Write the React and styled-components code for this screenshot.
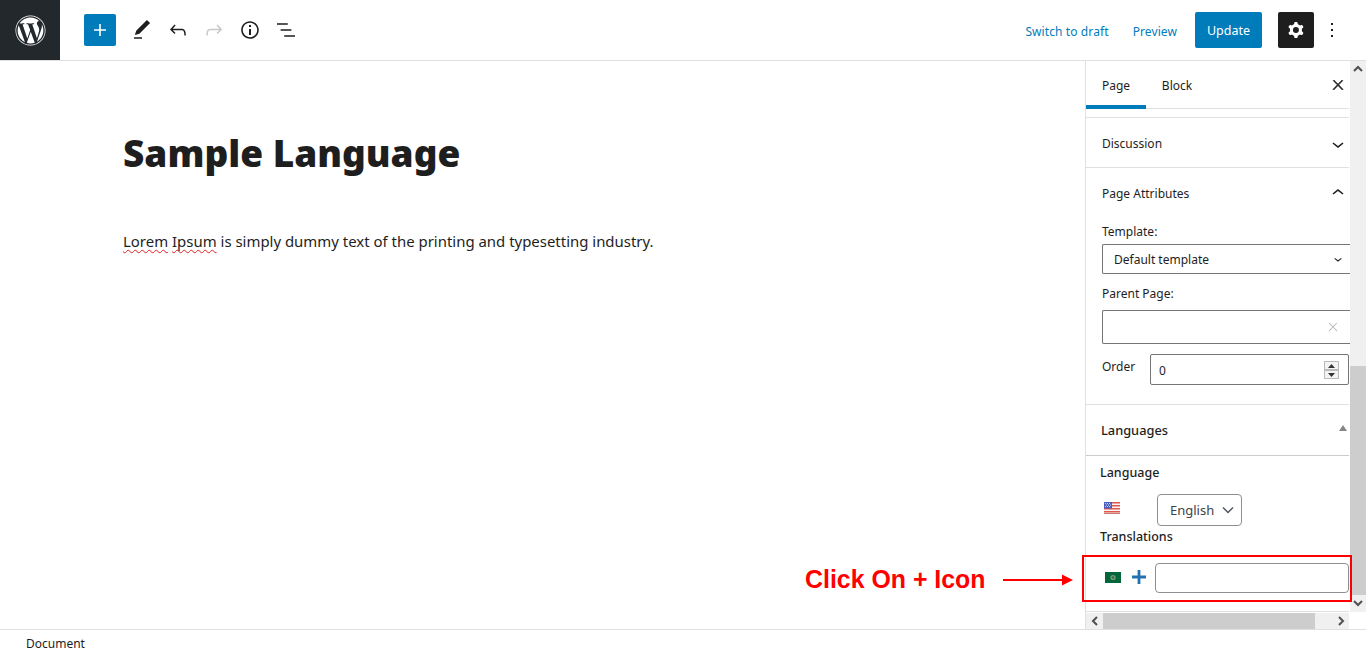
import React from "react";
import styled, { createGlobalStyle } from "styled-components";
import { FaWordpress } from "react-icons/fa";

const GlobalStyle = createGlobalStyle`
  html, body {
    margin: 0;
    padding: 0;
    background: #fff;
    overflow: hidden;
  }
  * {
    box-sizing: border-box;
  }
`;

const Page = styled.div`
  position: relative;
  display: flex;
  flex-direction: column;
  width: 1366px;
  height: 654px;
  overflow: hidden;
  font-family: "Noto Sans", "Open Sans", sans-serif;
  font-size: 12px;
  color: #1e1e1e;
`;

const Header = styled.header`
  display: flex;
  align-items: center;
  flex: 0 0 61px;
  border-bottom: 1px solid #e0e0e0;
`;

const Logo = styled.div`
  display: flex;
  align-items: center;
  justify-content: center;
  width: 60px;
  height: 60px;
  background: #23282d;
  color: #fff;
`;

const Tools = styled.div`
  display: flex;
  align-items: center;
  margin-left: 24px;
  flex: 1;
`;

const AddButton = styled.div`
  display: flex;
  align-items: center;
  justify-content: center;
  width: 32px;
  height: 32px;
  margin-right: 8px;
  border-radius: 2px;
  background: #007cba;
  color: #fff;
`;

const ToolIcon = styled.div`
  display: flex;
  align-items: center;
  justify-content: center;
  width: 36px;
  height: 36px;
  color: ${(p) => (p.$muted ? "#c8c8c8" : "#1e1e1e")};
`;

const Actions = styled.div`
  display: flex;
  align-items: center;
  padding-right: 22px;
`;

const LinkText = styled.span`
  color: #007cba;
  font-size: 12px;
  margin-top: 2px;
  margin-right: ${(p) => p.$gap}px;
  letter-spacing: 0.1px;
`;

const UpdateButton = styled.div`
  display: flex;
  align-items: center;
  justify-content: center;
  width: 67px;
  height: 36px;
  margin-right: 16px;
  padding-top: 1px;
  border-radius: 2px;
  background: #007cba;
  color: #fff;
  font-size: 12.5px;
`;

const GearButton = styled.div`
  display: flex;
  align-items: center;
  justify-content: center;
  width: 36px;
  height: 36px;
  margin-right: 6px;
  border-radius: 2px;
  background: #1e1e1e;
  color: #fff;
`;

const Body = styled.div`
  display: flex;
  flex: 1;
  min-height: 0;
`;

const Editor = styled.main`
  flex: 1;
  padding: 66px 0 0 123px;
`;

const Title = styled.h1`
  margin: 0;
  font-size: 37px;
  line-height: 52px;
  font-weight: 900;
  color: #1e1e1e;
`;

const Paragraph = styled.p`
  margin: 49px 0 0;
  font-size: 14.95px;
  line-height: 26px;
  color: #1e1e1e;
`;

const Misspelled = styled.span`
  text-decoration: underline wavy #e02020 1px;
  text-decoration-skip-ink: none;
  text-underline-offset: 2px;
`;

const Sidebar = styled.aside`
  display: flex;
  flex-direction: column;
  width: 281px;
  border-left: 1px solid #e0e0e0;
`;

const SidebarTop = styled.div`
  display: flex;
  flex: 1;
  min-height: 0;
`;

const Panel = styled.div`
  flex: 1;
  min-width: 0;
  overflow: hidden;
`;

const Tabs = styled.div`
  display: flex;
  align-items: center;
  height: 48px;
  border-bottom: 1px solid #e0e0e0;
  margin-right: 1px;
`;

const Tab = styled.div`
  display: flex;
  align-items: center;
  justify-content: center;
  width: ${(p) => p.$width}px;
  height: 47px;
  padding-top: 1px;
  font-size: 12px;
  box-shadow: ${(p) => (p.$active ? "inset 0 -3px 0 #007cba, 0 1px 0 #007cba" : "none")};
`;

const TabClose = styled.div`
  display: flex;
  margin-left: auto;
  margin-right: 3px;
`;

const Section = styled.section`
  border-top: 1px solid #e0e0e0;
  margin-right: 1px;
  margin-top: ${(p) => p.$top || 0}px;
`;

const SectionHead = styled.div`
  display: flex;
  align-items: center;
  justify-content: space-between;
  height: ${(p) => p.$height}px;
  padding: ${(p) => p.$nudge || 0}px 0 0 16px;
  font-size: 12px;
`;

const ChevronBox = styled.div`
  display: flex;
  width: 24px;
  margin-right: -1px;
`;

const SectionBody = styled.div`
  padding: 0 0 0 16px;
  height: 181px;
`;

const FieldLabel = styled.div`
  font-size: 12px;
  line-height: 16px;
  padding-top: 1px;
  margin-top: ${(p) => p.$top || 0}px;
`;

const SelectBox = styled.div`
  display: flex;
  align-items: center;
  justify-content: space-between;
  width: 248px;
  height: 30px;
  margin-top: 4px;
  padding-left: 11px;
  padding-right: 0;
  border: 1px solid #757575;
  border-right: 0;
  border-radius: 2px 0 0 2px;
  font-size: 12px;
`;

const SelectArrow = styled.div`
  display: flex;
  justify-content: center;
  width: 24px;
`;

const ComboBox = styled(SelectBox)`
  height: 34px;
  margin-top: 8px;
  padding-right: 5px;
  color: #b5b5b5;
`;

const OrderRow = styled.div`
  display: flex;
  align-items: flex-start;
  margin-top: 10px;
`;

const OrderLabel = styled.div`
  width: 48px;
  padding-top: 5px;
  font-size: 12px;
  line-height: 16px;
`;

const NumberInput = styled.div`
  display: flex;
  align-items: center;
  justify-content: space-between;
  width: 199px;
  height: 31px;
  padding: 2px 9px 0 8px;
  border: 1px solid #757575;
  border-radius: 2px;
  font-size: 12px;
`;

const Spinner = styled.div`
  display: flex;
  flex-direction: column;
  width: 15px;
  height: 18px;
  background: #e8e8e8;
  margin-top: -1px;
`;

const SpinCell = styled.div`
  display: flex;
  align-items: center;
  justify-content: center;
  flex: 1;
  border: 1px solid #bbb;
  background: #f3f3f3;
`;

const LangHead = styled.div`
  display: flex;
  align-items: center;
  justify-content: space-between;
  height: 51px;
  padding: 0 2px 1px 15px;
  border-bottom: 1px solid #ccc;
  font-size: 12.8px;
  font-weight: 500;
`;

const Triangle = styled.span`
  width: 0;
  height: 0;
  margin-bottom: 3px;
  border-left: 4px solid transparent;
  border-right: 4px solid transparent;
  border-bottom: 6px solid #82878c;
`;

const LangBody = styled.div`
  padding: 8px 0 0 14px;
  font-size: 13px;
`;

const LangTitle = styled.div`
  font-size: 12.5px;
  font-weight: 500;
  line-height: 18px;
`;

const LangRow = styled.div`
  display: flex;
  align-items: flex-start;
  height: 34px;
  margin-top: 12px;
`;

const FlagSlot = styled.div`
  width: 57px;
  padding: 8px 0 0 4px;
  display: flex;
`;

const LangSelect = styled.div`
  display: flex;
  align-items: center;
  justify-content: space-between;
  width: 85px;
  height: 32px;
  padding: 0 7px 0 12px;
  border: 1px solid #8c8f94;
  border-radius: 4px;
  font-size: 13px;
  color: #3c434a;
`;

const TranslationRow = styled.div`
  display: flex;
  align-items: center;
  height: 30px;
  margin-top: 17px;
  padding-left: 5px;
`;

const FlagNudge = styled.div`
  display: flex;
  margin-bottom: 2px;
`;

const PlusIcon = styled.div`
  display: flex;
  margin: 0 9px 2px 11px;
`;

const TextField = styled.input`
  width: 194px;
  height: 30px;
  padding: 0 8px;
  border: 1px solid #8c8f94;
  border-radius: 4px;
  background: #fff;
  outline: none;
`;

const PanelEnd = styled.div`
  height: 1px;
  margin-top: 18px;
  background: #e0e0e0;
`;

const VScroll = styled.div`
  display: flex;
  flex-direction: column;
  flex: 0 0 16px;
  background: #f0f0f0;
`;

const ScrollArrow = styled.div`
  display: flex;
  align-items: center;
  justify-content: center;
  flex: 0 0 ${(p) => p.$size || 16}px;
  color: #505050;
`;

const VThumb = styled.div`
  width: 16px;
  height: 229px;
  margin-top: 289px;
  background: #cdcdcd;
`;

const HScroll = styled.div`
  display: flex;
  align-items: stretch;
  flex: 0 0 16px;
  width: 263px;
  background: #f0f0f0;
  margin-top: 1px;
`;

const HThumb = styled.div`
  width: 212px;
  background: #cdcdcd;
`;

const HSpacer = styled.div`
  flex: 1;
`;

const Footer = styled.footer`
  display: flex;
  align-items: center;
  flex: 0 0 25px;
  padding: 2px 0 0 26px;
  border-top: 1px solid #e0e0e0;
  font-size: 12px;
`;

/* annotation drawn on top of the screenshot */
const Callout = styled.div`
  position: absolute;
  left: 1082px;
  top: 555px;
  width: 270px;
  height: 47px;
  border: 2px solid #f00;
`;

const CalloutText = styled.div`
  position: absolute;
  left: 805px;
  top: 564px;
  font-family: "Liberation Sans", Arial, sans-serif;
  font-size: 24.9px;
  line-height: 30px;
  font-weight: 700;
  color: #f00;
`;

const CalloutArrow = styled.svg`
  position: absolute;
  left: 1003px;
  top: 574px;
`;

const Icon = ({ d, size = 24, box = 24, rule, bold }) => (
  <svg width={size} height={size} viewBox={`0 0 ${box} ${box}`} fill="currentColor">
    <path d={d} fillRule={rule} stroke={bold ? "currentColor" : "none"} strokeWidth={bold ? 1 : 0} />
  </svg>
);

const paths = {
  plus: "M18 11.2h-5.2V6h-1.6v5.2H6v1.6h5.2V18h1.6v-5.2H18z",
  pencil: "M20.1 5.1L16.9 2 6.2 12.7l-1.3 4.4 4.5-1.3L20.1 5.1zM4 20.8h8v-1.5H4v1.5z",
  undo: "M18.3 11.7c-.6-.6-1.4-.9-2.3-.9H6.7l2.9-3.3-1.1-1-4.5 5L8.5 16l1-1-2.7-2.7H16c.5 0 .9.2 1.3.5 1 1 1 3.4 1 4.5v.3h1.5v-.2c0-1.5 0-4.3-1.5-5.7z",
  redo: "M15.6 6.5l-1.1 1 2.9 3.3H8c-.9 0-1.7.3-2.3.9-1.4 1.5-1.4 4.2-1.4 5.6v.2h1.5v-.3c0-1.1 0-3.5 1-4.5.3-.3.7-.5 1.3-.5h9.2L14.5 15l1.1 1.1 4.6-4.6-4.6-5z",
  info: "M12 3.2c-4.8 0-8.8 3.9-8.8 8.8 0 4.8 3.9 8.8 8.8 8.8 4.8 0 8.8-3.9 8.8-8.8 0-4.8-4-8.8-8.8-8.8zm0 16c-4 0-7.2-3.3-7.2-7.2C4.8 8 8 4.8 12 4.8s7.2 3.3 7.2 7.2c0 4-3.2 7.2-7.2 7.2zM11 17h2v-6h-2v6zm0-8h2V7h-2v2z",
  list: "M13.8 5.2H3v1.5h10.8V5.2zm-3.6 12v1.5H21v-1.5H10.2zm7.2-6H6.6v1.5h10.8v-1.5z",
  cog: "M10.289 4.836A1 1 0 0111.275 4h1.306a1 1 0 01.987.836l.244 1.466c.787.26 1.503.679 2.108 1.218l1.393-.522a1 1 0 011.216.437l.653 1.13a1 1 0 01-.23 1.273l-1.148.944a6.025 6.025 0 010 2.435l1.149.946a1 1 0 01.23 1.272l-.653 1.13a1 1 0 01-1.216.437l-1.394-.522c-.605.54-1.32.958-2.108 1.218l-.244 1.466a1 1 0 01-.987.836h-1.306a1 1 0 01-.986-.836l-.244-1.466a5.995 5.995 0 01-2.108-1.218l-1.394.522a1 1 0 01-1.217-.436l-.653-1.131a1 1 0 01.23-1.272l1.149-.946a6.026 6.026 0 010-2.435l-1.148-.944a1 1 0 01-.23-1.272l.653-1.131a1 1 0 011.217-.437l1.393.522a5.994 5.994 0 012.108-1.218l.244-1.466zM14.929 12a3 3 0 11-6 0 3 3 0 016 0z",
  dots: "M13 19h-2v-2h2v2zm0-6h-2v-2h2v2zm0-6h-2V5h2v2z",
  close: "M13 11.8l6.1-6.3-1-1-6.1 6.2-6.1-6.2-1 1 6.1 6.3-6.5 6.7 1 1 6.5-6.6 6.5 6.6 1-1z",
  down: "M17.5 11.6L12 16l-5.5-4.4.9-1.2L12 14l4.5-3.6 1 1.2z",
  up: "M6.5 12.4L12 8l5.5 4.4-.9 1.2L12 10l-4.5 3.6-1-1.2z",
};

const TinyChevron = ({ dir }) => {
  const points = {
    up: "1,7 5,3 9,7",
    down: "1,3 5,7 9,3",
    left: "7,1 3,5 7,9",
    right: "3,1 7,5 3,9",
  };
  return (
    <svg width="10" height="10" viewBox="0 0 10 10" fill="none" stroke="currentColor" strokeWidth="2">
      <polyline points={points[dir]} />
    </svg>
  );
};

const UsFlag = () => (
  <svg width="16" height="12" viewBox="0 0 16 12">
    <rect width="16" height="12" fill="#f4f4f4" />
    <rect y="0" width="16" height="1.5" fill="#e2574c" />
    <rect y="3" width="16" height="1.5" fill="#e2574c" />
    <rect y="6" width="16" height="1.5" fill="#e2574c" />
    <rect y="9" width="16" height="1.5" fill="#e2574c" />
    <rect y="11" width="16" height="1" fill="#c9776f" />
    <rect width="8" height="6.5" fill="#4a5fc0" />
    <path d="M1 1.5h1M3 1.5h1M5 1.5h1M2 3h1M4 3h1M6 3h1M1 4.5h1M3 4.5h1M5 4.5h1" stroke="#e8ecff" strokeWidth="0.8" />
  </svg>
);

const ArabicFlag = () => (
  <svg width="16" height="11" viewBox="0 0 16 11">
    <rect width="16" height="11" fill="#04663a" />
    <circle cx="8" cy="5.5" r="2.6" fill="#7c9a74" />
    <circle cx="8" cy="5.5" r="1.2" fill="#2f6a47" />
  </svg>
);

const BluePlus = () => (
  <svg width="14" height="14" viewBox="0 0 14 14">
    <path d="M5.6 0h2.8v5.6H14v2.8H8.4V14H5.6V8.4H0V5.6h5.6z" fill="#2271b1" />
  </svg>
);

const App = () => (
  <Page>
    <GlobalStyle />
    <Header>
      <Logo>
        <FaWordpress size={31} />
      </Logo>
      <Tools>
        <AddButton>
          <Icon d={paths.plus} />
        </AddButton>
        <ToolIcon>
          <Icon d={paths.pencil} />
        </ToolIcon>
        <ToolIcon>
          <Icon d={paths.undo} />
        </ToolIcon>
        <ToolIcon $muted>
          <Icon d={paths.redo} />
        </ToolIcon>
        <ToolIcon>
          <Icon d={paths.info} />
        </ToolIcon>
        <ToolIcon>
          <Icon d={paths.list} />
        </ToolIcon>
      </Tools>
      <Actions>
        <LinkText $gap={24}>Switch to draft</LinkText>
        <LinkText $gap={18}>Preview</LinkText>
        <UpdateButton>Update</UpdateButton>
        <GearButton>
          <Icon d={paths.cog} rule="evenodd" />
        </GearButton>
        <Icon d={paths.dots} />
      </Actions>
    </Header>

    <Body>
      <Editor>
        <Title>Sample Language</Title>
        <Paragraph>
          <Misspelled>Lorem</Misspelled> <Misspelled>Ipsum</Misspelled> is simply dummy text of the
          printing and typesetting industry.
        </Paragraph>
      </Editor>

      <Sidebar>
        <SidebarTop>
          <Panel>
            <Tabs>
              <Tab $active $width={60}>Page</Tab>
              <Tab $width={62}>Block</Tab>
              <TabClose>
                <Icon d={paths.close} size={16} bold />
              </TabClose>
            </Tabs>
            <Section $top={8}>
              <SectionHead $height={49} $nudge={2}>
                Discussion
                <ChevronBox>
                  <Icon d={paths.down} />
                </ChevronBox>
              </SectionHead>
            </Section>
            <Section>
              <SectionHead $height={50}>
                Page Attributes
                <ChevronBox>
                  <Icon d={paths.up} />
                </ChevronBox>
              </SectionHead>
              <SectionBody>
                <FieldLabel $top={5}>Template:</FieldLabel>
                <SelectBox>
                  Default template
                  <SelectArrow>
                    <Icon d={paths.down} size={16} />
                  </SelectArrow>
                </SelectBox>
                <FieldLabel $top={11}>Parent Page:</FieldLabel>
                <ComboBox>
                  <span />
                  <SelectArrow>
                    <Icon d={paths.close} size={14} />
                  </SelectArrow>
                </ComboBox>
                <OrderRow>
                  <OrderLabel>Order</OrderLabel>
                  <NumberInput>
                    0
                    <Spinner>
                      <SpinCell>
                        <svg width="7" height="4" viewBox="0 0 7 4">
                          <path d="M3.5 0L7 4H0z" fill="#333" />
                        </svg>
                      </SpinCell>
                      <SpinCell>
                        <svg width="7" height="4" viewBox="0 0 7 4">
                          <path d="M0 0h7L3.5 4z" fill="#333" />
                        </svg>
                      </SpinCell>
                    </Spinner>
                  </NumberInput>
                </OrderRow>
              </SectionBody>
            </Section>
            <Section>
              <LangHead>
                Languages
                <Triangle />
              </LangHead>
              <LangBody>
                <LangTitle>Language</LangTitle>
                <LangRow>
                  <FlagSlot>
                    <UsFlag />
                  </FlagSlot>
                  <LangSelect>
                    English
                    <svg width="12" height="8" viewBox="0 0 12 8" fill="none" stroke="#50575e" strokeWidth="1.5">
                      <polyline points="1,1.5 6,6.5 11,1.5" />
                    </svg>
                  </LangSelect>
                </LangRow>
                <LangTitle>Translations</LangTitle>
                <TranslationRow>
                  <FlagNudge>
                    <ArabicFlag />
                  </FlagNudge>
                  <PlusIcon>
                    <BluePlus />
                  </PlusIcon>
                  <TextField aria-label="Translation" />
                </TranslationRow>
              </LangBody>
              <PanelEnd />
            </Section>
          </Panel>
          <VScroll>
            <ScrollArrow>
              <TinyChevron dir="up" />
            </ScrollArrow>
            <VThumb />
            <ScrollArrow>
              <TinyChevron dir="down" />
            </ScrollArrow>
          </VScroll>
        </SidebarTop>
        <HScroll>
          <ScrollArrow $size={17}>
            <TinyChevron dir="left" />
          </ScrollArrow>
          <HThumb />
          <HSpacer />
          <ScrollArrow>
            <TinyChevron dir="right" />
          </ScrollArrow>
        </HScroll>
      </Sidebar>
    </Body>

    <Footer>Document</Footer>

    <Callout />
    <CalloutText>Click On + Icon</CalloutText>
    <CalloutArrow width="70" height="12" viewBox="0 0 70 12">
      <rect x="0" y="5" width="60" height="2" fill="#f00" />
      <path d="M59 0.5L70 6L59 11.5z" fill="#f00" />
    </CalloutArrow>
  </Page>
);

export default App;
